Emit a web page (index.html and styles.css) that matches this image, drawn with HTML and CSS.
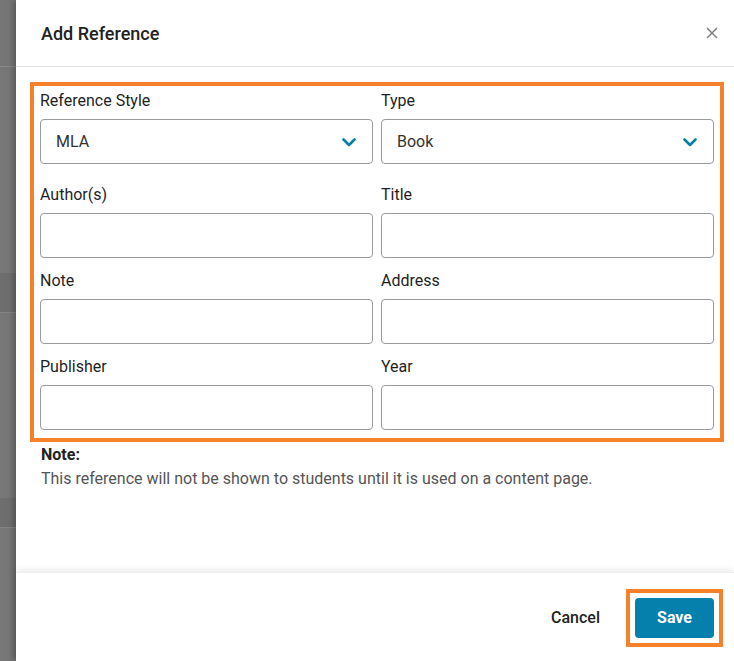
FILE: index.html
```html
<!DOCTYPE html>
<html lang="en">
<head>
<meta charset="utf-8">
<title>Add Reference</title>
<link rel="stylesheet" href="styles.css">
</head>
<body>
<div class="backdrop"></div>
<div class="modal">
  <div class="modal-header">
    <h2 class="modal-title">Add Reference</h2>
    <button class="close-btn" aria-label="Close">
      <svg width="12" height="12" viewBox="0 0 12 12"><path d="M1 1L11 11M11 1L1 11" stroke="#7a7a7a" stroke-width="1.4" fill="none"/></svg>
    </button>
  </div>
  <div class="modal-body">
    <div class="form-box">
      <div class="form-grid">
        <div class="field field-first">
          <label class="label">Reference Style</label>
          <div class="select">
            <span>MLA</span>
            <svg class="chev" width="14" height="9" viewBox="0 0 14 9"><path d="M1.5 1.5L7 7L12.5 1.5" stroke="#0a7ea8" stroke-width="2.6" fill="none" stroke-linecap="round" stroke-linejoin="round"/></svg>
          </div>
        </div>
        <div class="field field-first">
          <label class="label">Type</label>
          <div class="select">
            <span>Book</span>
            <svg class="chev" width="14" height="9" viewBox="0 0 14 9"><path d="M1.5 1.5L7 7L12.5 1.5" stroke="#0a7ea8" stroke-width="2.6" fill="none" stroke-linecap="round" stroke-linejoin="round"/></svg>
          </div>
        </div>
        <div class="field">
          <label class="label">Author(s)</label>
          <div class="input"></div>
        </div>
        <div class="field">
          <label class="label">Title</label>
          <div class="input"></div>
        </div>
        <div class="field">
          <label class="label">Note</label>
          <div class="input"></div>
        </div>
        <div class="field">
          <label class="label">Address</label>
          <div class="input"></div>
        </div>
        <div class="field">
          <label class="label">Publisher</label>
          <div class="input"></div>
        </div>
        <div class="field">
          <label class="label">Year</label>
          <div class="input"></div>
        </div>
      </div>
    </div>
    <div class="note">
      <div class="note-title">Note:</div>
      <div class="note-text">This reference will not be shown to students until it is used on a content page.</div>
    </div>
  </div>
  <div class="modal-footer">
    <button class="btn-cancel">Cancel</button>
    <div class="save-outline">
      <button class="btn-save">Save</button>
    </div>
  </div>
</div>
</body>
</html>
```

FILE: styles.css
```css
* { box-sizing: border-box; }
html, body { margin: 0; padding: 0; }
body {
  width: 734px;
  height: 661px;
  overflow: hidden;
  display: flex;
  font-family: Roboto, "Liberation Sans", Arial, sans-serif;
  color: #222;
  background: #fff;
}
.backdrop {
  width: 16px;
  flex: none;
  background:
    linear-gradient(to bottom,
      #767676 0, #767676 66px, #8a8a8a 66px, #8a8a8a 67px,
      #777 67px, #777 273px, #6e6e6e 273px, #6e6e6e 312px, #858585 312px, #858585 313px,
      #777 313px, #777 498px, #6e6e6e 498px, #6e6e6e 527px, #858585 527px, #858585 528px,
      #777 528px, #777 100%);
}
.modal {
  flex: 1;
  display: flex;
  flex-direction: column;
  background: #fff;
  box-shadow: -3px 0 6px rgba(0,0,0,0.25);
  position: relative;
}
.modal-header {
  height: 67px;
  flex: none;
  display: flex;
  align-items: center;
  justify-content: space-between;
  padding: 0 16px 0 25px;
  border-bottom: 1px solid #e2e2e2;
}
.modal-title {
  margin: 0;
  font-size: 18px;
  font-weight: 500;
  color: #222;
}
.close-btn {
  border: 0;
  background: none;
  padding: 0;
  width: 12px;
  height: 12px;
  display: flex;
}
.modal-body {
  flex: 1;
  padding: 15px 10px 0 14px;
}
.form-box {
  border: 4px solid #f7802a;
  padding: 4px 6px 8px 6px;
}
.form-grid {
  display: grid;
  grid-template-columns: 1fr 1fr;
  column-gap: 8px;
  row-gap: 12px;
}
.field-first { margin-bottom: 8px; }
.label {
  display: block;
  font-size: 16px;
  font-weight: 400;
  line-height: 20px;
  padding-top: 1px;
  margin-bottom: 8px;
  color: #1f1f1f;
}
.select, .input {
  height: 45px;
  border: 1px solid #9a9a9a;
  border-radius: 4px;
  background: #fff;
}
.select {
  display: flex;
  align-items: center;
  justify-content: space-between;
  padding: 0 16px 0 15px;
  font-size: 16px;
  color: #333;
}
.chev { display: block; margin-top: 1px; }
.note {
  padding: 1px 0 0 11px;
  line-height: 24px;
  font-size: 16px;
}
.note-title { font-weight: 700; color: #222; }
.note-text { color: #555; }
.modal-footer {
  height: 89px;
  flex: none;
  display: flex;
  align-items: center;
  justify-content: flex-end;
  padding: 1px 11px 0 0;
  box-shadow: 0 -3px 6px rgba(0,0,0,0.07);
  border-top: 1px solid #eee;
}
.btn-cancel {
  border: 0;
  background: none;
  font-family: inherit;
  font-size: 16px;
  font-weight: 500;
  color: #222;
  padding: 0;
  margin-right: 26px;
}
.save-outline {
  border: 4px solid #f7802a;
  padding: 5px;
}
.btn-save {
  display: block;
  width: 79px;
  height: 40px;
  border: 0;
  border-radius: 4px;
  background: #0580ad;
  color: #fff;
  font-family: inherit;
  font-size: 16px;
  font-weight: 700;
}
```
